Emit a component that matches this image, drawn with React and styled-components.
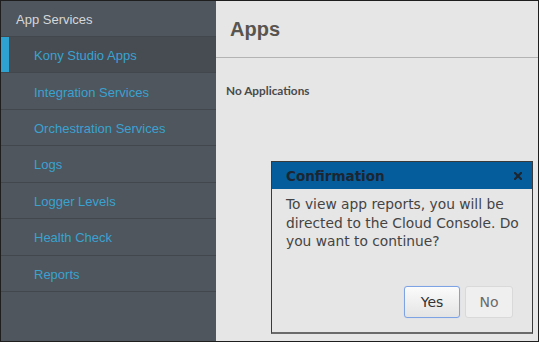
import React from "react";
import styled, { createGlobalStyle } from "styled-components";

const Global = createGlobalStyle`
  html, body { margin: 0; padding: 0; background: #e6e6e6; }
  * { box-sizing: border-box; }
`;

const Frame = styled.div`
  width: 539px;
  height: 342px;
  border: 1px solid #1e1e1e;
  display: flex;
  overflow: hidden;
  font-family: "Liberation Sans", Arial, sans-serif;
`;

const Sidebar = styled.nav`
  width: 215px;
  flex: none;
  background: #4f565d;
  display: flex;
  flex-direction: column;
`;

const SideHeader = styled.div`
  height: 36px;
  padding: 2px 0 0 15px;
  display: flex;
  align-items: center;
  font-size: 13px;
  color: #d6d8da;
  border-bottom: 1px solid #41474d;
`;

const NavItem = styled.div`
  height: 36.43px;
  padding: 2px 0 0 33px;
  display: flex;
  align-items: center;
  font-size: 13px;
  color: #3aa2d1;
  border-bottom: 1px solid #41474d;
  background: ${(p) => (p.$active ? "#464c52" : "transparent")};
  box-shadow: ${(p) => (p.$active ? "inset 8px 0 0 #2ea3d2" : "none")};
`;

const Main = styled.main`
  flex: 1;
  position: relative;
  background: #e6e6e6;
`;

const TitleBar = styled.header`
  height: 57px;
  padding-left: 14px;
  display: flex;
  align-items: center;
  border-bottom: 1px solid #b3b3b3;
`;

const Title = styled.h1`
  margin: 0;
  font-size: 20px;
  font-weight: 700;
  color: #58544f;
`;

const Empty = styled.p`
  margin: 0;
  padding: 25px 0 0 10px;
  font-family: Lato, "Open Sans", sans-serif;
  font-weight: 700;
  font-size: 11.8px;
  color: #4a4a4a;
`;

const Dialog = styled.div`
  position: absolute;
  left: 55px;
  top: 160px;
  width: 262px;
  height: 173px;
  border: 1px solid #3a3a3a;
  border-bottom: 2px solid #6a6a6a;
  background: #e6e6e6;
  display: flex;
  flex-direction: column;
  font-family: "DejaVu Sans", Verdana, sans-serif;
`;

const DialogHeader = styled.div`
  height: 27px;
  background: #065d9c;
  display: flex;
  align-items: center;
  justify-content: space-between;
  padding: 0 10px 0 14px;
`;

const DialogTitle = styled.span`
  font-weight: 700;
  font-size: 13.5px;
  color: #1c2631;
`;

const Close = styled.svg`
  width: 8px;
  height: 8px;
  display: block;
`;

const DialogBody = styled.div`
  flex: 1;
  padding: 6px 8px 0 14px;
  font-size: 13.8px;
  line-height: 18.5px;
  color: #444;
`;

const Footer = styled.div`
  display: flex;
  justify-content: flex-end;
  gap: 5px;
  padding: 0 19px 14px 0;
`;

const Button = styled.button`
  height: 32px;
  width: ${(p) => p.$w}px;
  border-radius: 3px;
  font-family: "DejaVu Sans", Verdana, sans-serif;
  font-size: 14px;
  padding: 0;
  border: 1px solid ${(p) => (p.$primary ? "#7ea3e4" : "#d9d9d9")};
  color: ${(p) => (p.$primary ? "#333" : "#6a6a6a")};
  background: ${(p) =>
    p.$primary ? "linear-gradient(#fbfbfb, #e4e4e4)" : "#efefef"};
  box-shadow: ${(p) => (p.$primary ? "0 0 1px #a9c2ee" : "none")};
`;

const items = [
  "Kony Studio Apps",
  "Integration Services",
  "Orchestration Services",
  "Logs",
  "Logger Levels",
  "Health Check",
  "Reports",
];

export default function App() {
  return (
    <>
      <Global />
      <Frame>
        <Sidebar>
          <SideHeader>App Services</SideHeader>
          {items.map((t, i) => (
            <NavItem key={t} $active={i === 0}>
              {t}
            </NavItem>
          ))}
        </Sidebar>
        <Main>
          <TitleBar>
            <Title>Apps</Title>
          </TitleBar>
          <Empty>No Applications</Empty>
          <Dialog>
            <DialogHeader>
              <DialogTitle>Confirmation</DialogTitle>
              <Close viewBox="0 0 8 8">
                <path d="M1 1 L7 7 M7 1 L1 7" stroke="#1c2631" strokeWidth="2.2" strokeLinecap="square" />
              </Close>
            </DialogHeader>
            <DialogBody>
              To view app reports, you will be directed to the Cloud Console. Do you want to continue?
            </DialogBody>
            <Footer>
              <Button $primary $w={56}>Yes</Button>
              <Button $w={48}>No</Button>
            </Footer>
          </Dialog>
        </Main>
      </Frame>
    </>
  );
}
